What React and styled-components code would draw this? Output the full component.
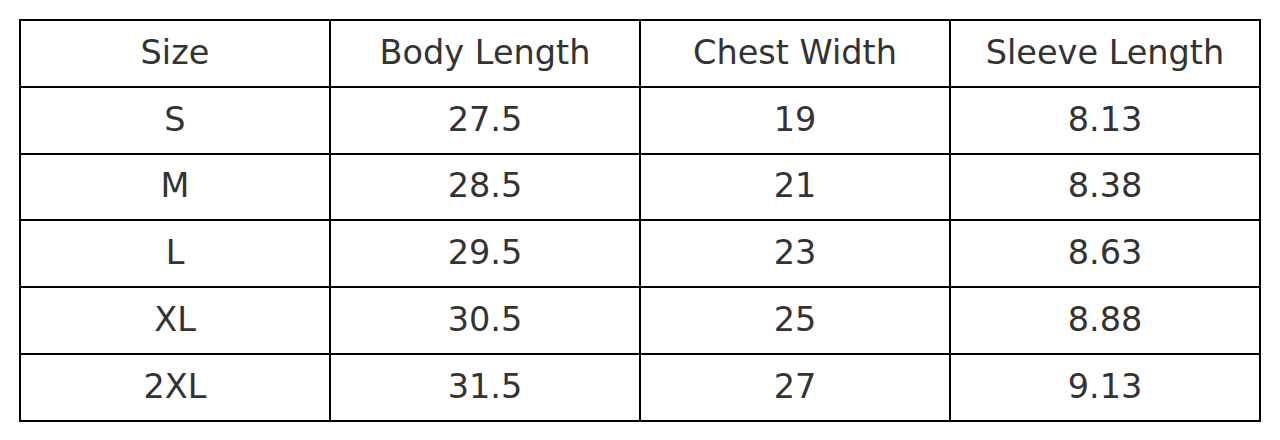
import React from 'react'
import styled, {createGlobalStyle} from 'styled-components'

const GlobalStyle = createGlobalStyle`
  html, body {
    margin: 0;
    padding: 0;
    background: #fff;
  }
  body {
    font-family: "DejaVu Sans", "Liberation Sans", sans-serif;
  }
`

const Page = styled.div`
  padding: 19px;
  width: 1280px;
  box-sizing: border-box;
`

const Table = styled.table`
  width: 1242px;
  border-collapse: collapse;
  table-layout: fixed;
  border: 2px solid #000;
`

const Row = styled.tr`
  height: 66.8px;
`

const Cell = styled.td`
  border: 2px solid #000;
  padding: 0 0 2px;
  text-align: center;
  vertical-align: middle;
  font-size: 33.5px;
  font-weight: 400;
  color: #333;
`

const headers = ['Size', 'Body Length', 'Chest Width', 'Sleeve Length']

const rows = [
  ['S', '27.5', '19', '8.13'],
  ['M', '28.5', '21', '8.38'],
  ['L', '29.5', '23', '8.63'],
  ['XL', '30.5', '25', '8.88'],
  ['2XL', '31.5', '27', '9.13'],
]

export default function App() {
  return (
    <>
      <GlobalStyle />
      <Page>
        <Table>
          <tbody>
            <Row>
              {headers.map((h) => (
                <Cell as="th" key={h}>
                  {h}
                </Cell>
              ))}
            </Row>
            {rows.map((r) => (
              <Row key={r[0]}>
                {r.map((v, i) => (
                  <Cell key={i}>{v}</Cell>
                ))}
              </Row>
            ))}
          </tbody>
        </Table>
      </Page>
    </>
  )
}
